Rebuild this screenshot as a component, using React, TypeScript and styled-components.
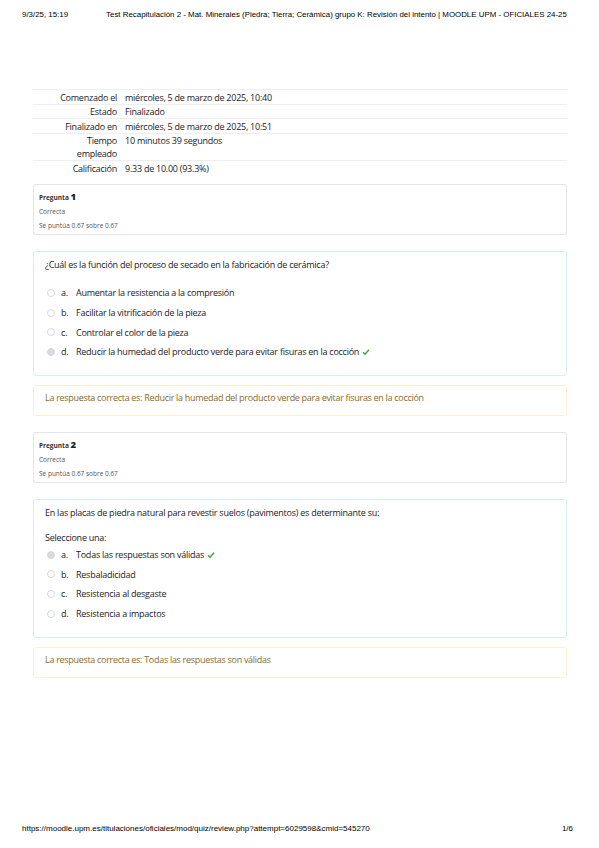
import { createGlobalStyle, styled } from "styled-components";

const GlobalStyle = createGlobalStyle`
  html, body {
    margin: 0;
    padding: 0;
    background: #ffffff;
  }
  body {
    font-family: "Open Sans", "Noto Sans", sans-serif;
    color: #1d2125;
  }
`;

const Page = styled.div`
  width: 599px;
  height: 848px;
  display: flex;
  flex-direction: column;
  box-sizing: border-box;
`;

const PrintBar = styled.div`
  display: flex;
  justify-content: space-between;
  padding: 0 26px 0 22px;
  font-family: "Liberation Sans", Arial, sans-serif;
  font-size: 8px;
  color: #000;
  height: 12px;
  line-height: 12px;
  white-space: nowrap;
`;

const Header = styled(PrintBar)`
  margin-top: 9px;
  justify-content: flex-start;
  gap: 38px;
  font-size: 7.9px;
`;

const Footer = styled(PrintBar)`
  margin-top: auto;
  margin-bottom: 13px;
`;

const Main = styled.div`
  margin-top: 68px;
  padding: 0 32px 0 33px;
  display: flex;
  flex-direction: column;
`;

const Summary = styled.div`
  display: flex;
  flex-direction: column;
  font-size: 9px;
  letter-spacing: -0.25px;
  margin-bottom: 9.5px;
`;

const SummaryRow = styled.div`
  display: grid;
  grid-template-columns: 84px 1fr;
  column-gap: 8px;
  border-top: 1px solid #eceef0;
  padding: 0.5px 0 0;
  line-height: 13px;
`;

const Label = styled.div`
  text-align: right;
  padding-left: 22px;
`;

const Value = styled.div``;

const InfoBox = styled.div`
  border: 1px solid #e3e6e9;
  border-radius: 2px;
  padding: 5px 5px 2px;
  height: 51px;
  box-sizing: border-box;
  font-size: 6.5px;
  line-height: 14px;
  color: #1d2125;
`;

const QNo = styled.div`
  font-weight: 700;
  color: #333;
  & strong {
    font-size: 9.5px;
    color: #1d2125;
  }
`;

const InfoLine = styled.div`
  color: #555;
`;

const Formulation = styled.div`
  margin-top: 16px;
  border: 1px solid #d6edf1;
  border-radius: 3px;
  padding: 6px 11px 13px;
  font-size: 9px;
  letter-spacing: -0.25px;
`;

const QText = styled.div<{ $gap: number }>`
  line-height: 14px;
  margin-bottom: ${({ $gap }) => $gap}px;
`;

const Prompt = styled.div`
  line-height: 14px;
`;

const Options = styled.div`
  display: flex;
  flex-direction: column;
`;

const Option = styled.div`
  display: flex;
  align-items: center;
  height: 19.7px;
  padding-left: 2px;
`;

const Radio = styled.span<{ $checked?: boolean }>`
  width: 6px;
  height: 6px;
  border-radius: 50%;
  border: 1px solid #d6d9dc;
  background: ${({ $checked }) => ($checked ? "#d8dadc" : "#fff")};
  margin-right: 6px;
  flex-shrink: 0;
`;

const Letter = styled.span`
  width: 15px;
  flex-shrink: 0;
`;

const Check = styled.svg`
  width: 8px;
  height: 8px;
  margin-left: 3px;
`;

const Feedback = styled.div`
  margin-top: 9px;
  margin-bottom: 16px;
  border: 1px solid #fcefd2;
  border-radius: 3px;
  height: 31px;
  box-sizing: border-box;
  padding: 5.5px 11px 0;
  font-size: 9px;
  letter-spacing: -0.3px;
  line-height: 14px;
  color: #8d6a22;
`;

type Opt = { letter: string; text: string; correct?: boolean };

const CheckIcon = () => (
  <Check viewBox="0 0 16 16">
    <path d="M2 8.5 L6 12.5 L14 3.5" fill="none" stroke="#3aa83a" strokeWidth="2.8" />
  </Check>
);

const OptionList = ({ options }: { options: Opt[] }) => (
  <Options>
    {options.map((o) => (
      <Option key={o.letter}>
        <Radio $checked={o.correct} />
        <Letter>{o.letter}.</Letter>
        <span>{o.text}</span>
        {o.correct && <CheckIcon />}
      </Option>
    ))}
  </Options>
);

const Info = ({ n }: { n: number }) => (
  <InfoBox>
    <QNo>
      Pregunta <strong>{n}</strong>
    </QNo>
    <InfoLine>Correcta</InfoLine>
    <InfoLine>Se puntúa 0.67 sobre 0.67</InfoLine>
  </InfoBox>
);

const summary = [
  ["Comenzado el", "miércoles, 5 de marzo de 2025, 10:40"],
  ["Estado", "Finalizado"],
  ["Finalizado en", "miércoles, 5 de marzo de 2025, 10:51"],
  ["Tiempo empleado", "10 minutos 39 segundos"],
  ["Calificación", "9.33 de 10.00 (93.3%)"],
];

const q1: Opt[] = [
  { letter: "a", text: "Aumentar la resistencia a la compresión" },
  { letter: "b", text: "Facilitar la vitrificación de la pieza" },
  { letter: "c", text: "Controlar el color de la pieza" },
  { letter: "d", text: "Reducir la humedad del producto verde para evitar fisuras en la cocción", correct: true },
];

const q2: Opt[] = [
  { letter: "a", text: "Todas las respuestas son válidas", correct: true },
  { letter: "b", text: "Resbaladicidad" },
  { letter: "c", text: "Resistencia al desgaste" },
  { letter: "d", text: "Resistencia a impactos" },
];

export default function App() {
  return (
    <>
      <GlobalStyle />
      <Page>
        <Header>
          <span>9/3/25, 15:19</span>
          <span>
            Test Recapitulación 2 - Mat. Minerales (Piedra; Tierra; Cerámica) grupo K: Revisión del intento | MOODLE UPM - OFICIALES 24-25
          </span>
        </Header>
        <Main>
          <Summary>
            {summary.map(([l, v]) => (
              <SummaryRow key={l}>
                <Label>{l}</Label>
                <Value>{v}</Value>
              </SummaryRow>
            ))}
          </Summary>

          <Info n={1} />
          <Formulation>
            <QText $gap={11}>¿Cuál es la función del proceso de secado en la fabricación de cerámica?</QText>
            <OptionList options={q1} />
          </Formulation>
          <Feedback>
            La respuesta correcta es: Reducir la humedad del producto verde para evitar fisuras en la cocción
          </Feedback>

          <Info n={2} />
          <Formulation>
            <QText $gap={11}>
              En las placas de piedra natural para revestir suelos (pavimentos) es determinante su:
            </QText>
            <Prompt>Seleccione una:</Prompt>
            <OptionList options={q2} />
          </Formulation>
          <Feedback>La respuesta correcta es: Todas las respuestas son válidas</Feedback>
        </Main>
        <Footer>
          <span>https://moodle.upm.es/titulaciones/oficiales/mod/quiz/review.php?attempt=6029598&amp;cmid=545270</span>
          <span>1/6</span>
        </Footer>
      </Page>
    </>
  );
}
